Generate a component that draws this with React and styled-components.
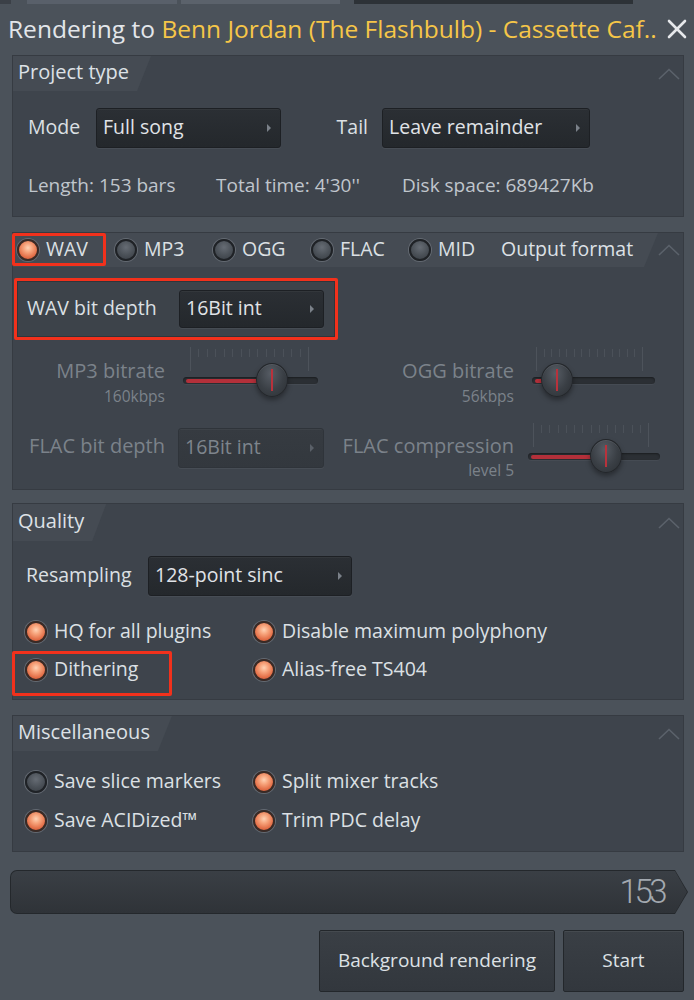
import React from 'react';
import styled, { createGlobalStyle, css } from 'styled-components';

const GlobalStyle = createGlobalStyle`
  html, body { margin: 0; padding: 0; background: #4b525a; }
  body { font-family: "Open Sans", "Noto Sans", sans-serif; color: #d9dde2; }
  * { box-sizing: border-box; }
`;

const Window = styled.div`
  width: 694px;
  height: 1000px;
  background: #4b525a;
  display: flex;
  flex-direction: column;
  overflow: hidden;
`;

const TopStrip = styled.div`
  height: 4px;
  flex: none;
  background: linear-gradient(90deg, #3b4047 0 11px, #4b525a 11px 27px, #59606a 27px 177px, #4b525a 177px 181px, #5b626b 181px 340px, #4b525a 340px 354px, #2d3237 354px 633px, #4b525a 633px);
`;

const TitleBar = styled.div`
  height: 51px;
  flex: none;
  display: flex;
  align-items: center;
  justify-content: space-between;
  padding: 0 6px 2px 8px;
`;

const Title = styled.div`
  font-size: 24.5px;
  white-space: nowrap;
  color: #e3e6ea;
`;

const TitleAccent = styled.span`
  color: #f6c648;
`;

const CloseIcon = styled.svg`
  width: 22px;
  height: 22px;
  flex: none;
`;

const Panel = styled.section`
  margin: ${p => p.$mt}px 10px 0 12px;
  height: ${p => p.$h}px;
  flex: none;
  background: #3e444c;
  border: 1px solid #363b42;
  display: flex;
  flex-direction: column;
`;

const Header = styled.div`
  display: flex;
  align-items: center;
  height: ${p => p.$h}px;
  flex: none;
`;

const Tab = styled.div`
  position: relative;
  isolation: isolate;
  height: 100%;
  display: flex;
  align-items: center;
  padding: 0 ${p => p.$pr ?? 22}px ${p => p.$pb ?? 4}px ${p => p.$pl ?? 5}px;
  font-size: 20px;
  color: #dde1e6;
  white-space: nowrap;
  ${p => p.$w && css`width: ${p.$w}px;`}
  &::before {
    content: '';
    position: absolute;
    inset: 0;
    z-index: -1;
    background: #454b53;
    clip-path: polygon(0 0, 100% 0, calc(100% - 14px) 100%, 0 100%);
  }
`;

const Chevron = styled.svg`
  width: 22px;
  height: 12px;
  margin-left: auto;
  margin-right: 3px;
  flex: none;
`;

const ChevronUp = () => (
  <Chevron viewBox="0 0 22 12">
    <polyline points="1,11 11,1.5 21,11" fill="none" stroke="#5b626b" strokeWidth="1.6" />
  </Chevron>
);

const Row = styled.div`
  display: flex;
  align-items: center;
  margin-top: ${p => p.$mt || 0}px;
  padding-left: ${p => p.$pl || 0}px;
`;

const Label = styled.div`
  width: ${p => p.$w}px;
  flex: none;
  font-size: 19.5px;
  padding-bottom: 3px;
  color: #dce0e4;
  white-space: nowrap;
  text-align: ${p => p.$align || 'left'};
  padding-right: ${p => p.$pr || 0}px;
`;

const Select = styled.div`
  width: ${p => p.$w}px;
  height: ${p => p.$h || 40}px;
  flex: none;
  margin-left: ${p => p.$ml || 0}px;
  margin-top: ${p => p.$mt || 0}px;
  display: flex;
  align-items: center;
  justify-content: space-between;
  padding: 0 9px 3px 6px;
  background: linear-gradient(#2b2f34, #24282c);
  border: 1px solid #1d2024;
  border-radius: 3px;
  box-shadow: 0 1px 0 rgba(255, 255, 255, 0.05), inset 0 1px 0 rgba(255, 255, 255, 0.04);
  color: #e0e3e7;
  font-size: 19.5px;
  white-space: nowrap;
  ${p => p.$disabled && css`
    background: linear-gradient(#363b41, #33383e);
    border-color: #2f343a;
    color: #7e858d;
  `}
`;

const Caret = styled.span`
  width: 0;
  height: 0;
  margin-top: 3px;
  border-top: 4px solid transparent;
  border-bottom: 4px solid transparent;
  border-left: 4px solid ${p => (p.$disabled ? '#5a6068' : '#7b8189')};
`;

const Dropdown = ({ children, ...rest }) => (
  <Select {...rest}>
    <span>{children}</span>
    <Caret $disabled={rest.$disabled} />
  </Select>
);

const InfoRow = styled.div`
  display: flex;
  margin-top: 24px;
  padding-left: 15px;
  font-size: 19px;
  color: #c0c6cc;
`;

const InfoItem = styled.div`
  width: ${p => p.$w || 'auto'};
  flex: none;
  white-space: nowrap;
`;

const highlight = css`
  position: relative;
  &::after {
    content: '';
    position: absolute;
    inset: ${p => p.$hl};
    border: 3px solid #f2311c;
    border-radius: 2px;
    pointer-events: none;
  }
`;

const Option = styled.div`
  display: flex;
  align-items: center;
  gap: 7px;
  flex: none;
  height: ${p => p.$h || 38}px;
  width: ${p => (p.$w ? `${p.$w}px` : 'auto')};
  padding-left: ${p => p.$pl || 0}px;
  font-size: 19.5px;
  color: #dce0e4;
  white-space: nowrap;
  ${p => p.$hl && highlight}
`;

const OptionText = styled.span`
  padding-bottom: 3px;
`;

const Radio = styled.span`
  width: 22px;
  height: 22px;
  border-radius: 50%;
  flex: none;
  border: 2px solid ${p => (p.$on ? '#3a2a25' : '#1f2226')};
  box-shadow: 0 0 0 1px #646a72;
  background: ${p =>
    p.$on
      ? 'radial-gradient(circle at 50% 38%, #ffd2b4 0%, #f7a47c 30%, #e4714a 65%, #bf4d2d 100%)'
      : 'radial-gradient(circle at 50% 35%, #666c74 0%, #4a5057 55%, #383d43 100%)'};
`;

const RadioOption = ({ on, children, ...rest }) => (
  <Option {...rest}>
    <Radio $on={on} />
    <OptionText>{children}</OptionText>
  </Option>
);

const HeaderLabel = styled.span`
  font-size: 19.5px;
  padding-bottom: 3px;
`;

const BitBox = styled.div`
  ${highlight}
  margin: 14px 0 0 4px;
  width: 318px;
  height: 56px;
  display: flex;
  align-items: center;
  padding-left: 9px;
  border: 1px solid #30353b;
  background: #3d434a;
`;

const FormatGrid = styled.div`
  display: grid;
  grid-template-columns: 152px 148px 177px 140px;
  grid-template-rows: 76px auto;
  column-gap: 12px;
  margin-top: 10px;
  color: #7b828a;
`;

const DimCell = styled.div`
  text-align: right;
  padding-top: ${p => p.$pt || 11}px;
  white-space: nowrap;
`;

const DimLabel = styled.div`
  font-size: 20px;
  line-height: 26px;
`;

const SubLabel = styled.div`
  font-size: 15.5px;
  line-height: 20px;
  margin-top: ${p => p.$mt || 2}px;
`;

const SliderBox = styled.div`
  position: relative;
  width: ${p => p.$w}px;
  height: 56px;
  margin-left: ${p => p.$ml || 0}px;
`;

const Ticks = styled.svg`
  position: absolute;
  left: 0;
  top: 0;
`;

const Track = styled.div`
  position: absolute;
  left: 0;
  right: 0;
  top: 30px;
  height: 7px;
  border-radius: 4px;
  background: #2b2f34;
  box-shadow: inset 0 1px 2px rgba(0, 0, 0, 0.4), 0 1px 0 rgba(255, 255, 255, 0.04);
`;

const Fill = styled.div`
  position: absolute;
  left: 3px;
  top: 31.5px;
  height: 4px;
  border-radius: 2px;
  background: #b3303a;
`;

const Knob = styled.div`
  position: absolute;
  top: 16px;
  width: 32px;
  height: 34px;
  border-radius: 50%;
  background: radial-gradient(ellipse at 45% 30%, #565c64 0%, #3a3f45 55%, #2b2f34 100%);
  border: 1px solid #24272b;
  box-shadow: 0 3px 5px rgba(0, 0, 0, 0.35), inset 0 1px 0 rgba(255, 255, 255, 0.08);
  &::after {
    content: '';
    position: absolute;
    left: 50%;
    top: 5px;
    bottom: 5px;
    width: 2px;
    margin-left: -1px;
    background: #b8323c;
  }
`;

const Slider = ({ w, ml, knob, tickFrom, tickTo }) => {
  const ticks = [];
  const n = 14;
  for (let i = 1; i < n; i++) {
    const x = Math.round(tickFrom + ((tickTo - tickFrom) * i) / n) + 0.5;
    ticks.push(<line key={i} x1={x} y1="2" x2={x} y2="10" stroke="#4b5159" strokeWidth="1" />);
  }
  return (
    <SliderBox $w={w} $ml={ml}>
      <Ticks width={w} height="26">
        <line x1={tickFrom + 0.5} y1="0" x2={tickFrom + 0.5} y2="24" stroke="#4d535b" strokeWidth="1" />
        <line x1={tickTo + 0.5} y1="0" x2={tickTo + 0.5} y2="24" stroke="#4d535b" strokeWidth="1" />
        {ticks}
      </Ticks>
      <Track />
      <Fill style={{ width: Math.max(0, knob - 8) }} />
      <Knob style={{ left: knob - 16 }} />
    </SliderBox>
  );
};

const OptionGrid = styled.div`
  display: grid;
  grid-template-columns: 228px auto;
  grid-auto-rows: ${p => p.$row || 38}px;
  margin-top: ${p => p.$mt}px;
  padding-left: 12px;
`;

const ProgressOuter = styled.div`
  margin: 18px 6px 0 10px;
  height: 44px;
  flex: none;
  padding: 1px;
  background: #24282c;
  border-radius: 7px 0 0 7px;
  clip-path: polygon(0 0, calc(100% - 13px) 0, 100% 50%, calc(100% - 13px) 100%, 0 100%);
`;

const ProgressInner = styled.div`
  height: 100%;
  border-radius: 6px 0 0 6px;
  background: linear-gradient(#3a3f45, #2f3338);
  clip-path: polygon(0 0, calc(100% - 12px) 0, 100% 50%, calc(100% - 12px) 100%, 0 100%);
  display: flex;
  align-items: center;
  justify-content: flex-end;
  padding: 0 23px 2px 0;
  font-family: "Roboto", "Open Sans", sans-serif;
  font-weight: 300;
  font-size: 33px;
  letter-spacing: -3.5px;
  color: #a3a9b0;
`;

const ButtonRow = styled.div`
  display: flex;
  justify-content: flex-end;
  gap: 8px;
  margin: 16px 10px 0 0;
`;

const Button = styled.button`
  width: ${p => p.$w}px;
  height: 62px;
  background: linear-gradient(#3a3f45, #32373d);
  border: 1px solid #23272b;
  border-radius: 2px;
  box-shadow: inset 0 1px 0 rgba(255, 255, 255, 0.06);
  color: #dde1e5;
  font-family: inherit;
  font-size: 19px;
  padding: 0 0 3px;
`;

export default function App() {
  return (
    <Window>
      <GlobalStyle />
      <TopStrip />
      <TitleBar>
        <Title>
          Rendering to <TitleAccent>Benn Jordan (The Flashbulb) - Cassette Caf..</TitleAccent>
        </Title>
        <CloseIcon viewBox="0 0 22 22">
          <line x1="3" y1="3" x2="19" y2="19" stroke="#e6e8eb" strokeWidth="2.6" strokeLinecap="round" />
          <line x1="19" y1="3" x2="3" y2="19" stroke="#e6e8eb" strokeWidth="2.6" strokeLinecap="round" />
        </CloseIcon>
      </TitleBar>

      <Panel $mt={0} $h={162}>
        <Header $h={35}>
          <Tab>Project type</Tab>
          <ChevronUp />
        </Header>
        <Row $mt={17} $pl={15}>
          <Label $w={68}>Mode</Label>
          <Dropdown $w={185}>Full song</Dropdown>
          <Label $w={101} $align="right" $pr={14}>Tail</Label>
          <Dropdown $w={208}>Leave remainder</Dropdown>
        </Row>
        <InfoRow>
          <InfoItem $w="188px">Length: 153 bars</InfoItem>
          <InfoItem $w="186px">Total time: 4'30''</InfoItem>
          <InfoItem>Disk space: 689427Kb</InfoItem>
        </InfoRow>
      </Panel>

      <Panel $mt={15} $h={258}>
        <Header $h={34}>
          <Tab $w={646} $pl={2} $pr={0} $pb={0}>
            <RadioOption on $w={88} $h={34} $pl={2} $hl="0 -3px 1px -3px" style={{ marginRight: 10 }}>WAV</RadioOption>
            <RadioOption $w={98} $h={34} $pl={2}>MP3</RadioOption>
            <RadioOption $w={98} $h={34} $pl={2}>OGG</RadioOption>
            <RadioOption $w={98} $h={34} $pl={2}>FLAC</RadioOption>
            <RadioOption $w={94} $h={34} $pl={2}>MID</RadioOption>
            <HeaderLabel>Output format</HeaderLabel>
          </Tab>
          <ChevronUp />
        </Header>
        <BitBox $hl="-4px">
          <Label $w={152}>WAV bit depth</Label>
          <Dropdown $w={145} $h={38}>16Bit int</Dropdown>
        </BitBox>
        <FormatGrid>
          <DimCell>
            <DimLabel>MP3 bitrate</DimLabel>
            <SubLabel>160kbps</SubLabel>
          </DimCell>
          <Slider w={135} ml={6} knob={89} tickFrom={7} tickTo={125} />
          <DimCell>
            <DimLabel>OGG bitrate</DimLabel>
            <SubLabel>56kbps</SubLabel>
          </DimCell>
          <Slider w={123} ml={6} knob={25} tickFrom={4} tickTo={110} />

          <DimCell $pt={10}>
            <DimLabel>FLAC bit depth</DimLabel>
          </DimCell>
          <Dropdown $disabled $w={146} $ml={1} $mt={5}>16Bit int</Dropdown>
          <DimCell $pt={10}>
            <DimLabel>FLAC compression</DimLabel>
            <SubLabel $mt={1}>level 5</SubLabel>
          </DimCell>
          <Slider w={132} ml={2} knob={78} tickFrom={5} tickTo={120} />
        </FormatGrid>
      </Panel>

      <Panel $mt={13} $h={197}>
        <Header $h={37}>
          <Tab>Quality</Tab>
          <ChevronUp />
        </Header>
        <Row $mt={15} $pl={13}>
          <Label $w={122}>Resampling</Label>
          <Dropdown $w={204}>128-point sinc</Dropdown>
        </Row>
        <OptionGrid $mt={17}>
          <RadioOption on>HQ for all plugins</RadioOption>
          <RadioOption on>Disable maximum polyphony</RadioOption>
          <RadioOption on $hl="0 81px -7px -13px">Dithering</RadioOption>
          <RadioOption on>Alias-free TS404</RadioOption>
        </OptionGrid>
      </Panel>

      <Panel $mt={15} $h={137}>
        <Header $h={35}>
          <Tab>Miscellaneous</Tab>
          <ChevronUp />
        </Header>
        <OptionGrid $mt={12} $row={39}>
          <RadioOption>Save slice markers</RadioOption>
          <RadioOption on>Split mixer tracks</RadioOption>
          <RadioOption on>Save ACIDized™</RadioOption>
          <RadioOption on>Trim PDC delay</RadioOption>
        </OptionGrid>
      </Panel>

      <ProgressOuter>
        <ProgressInner>153</ProgressInner>
      </ProgressOuter>

      <ButtonRow>
        <Button $w={236}>Background rendering</Button>
        <Button $w={121}>Start</Button>
      </ButtonRow>
    </Window>
  );
}
